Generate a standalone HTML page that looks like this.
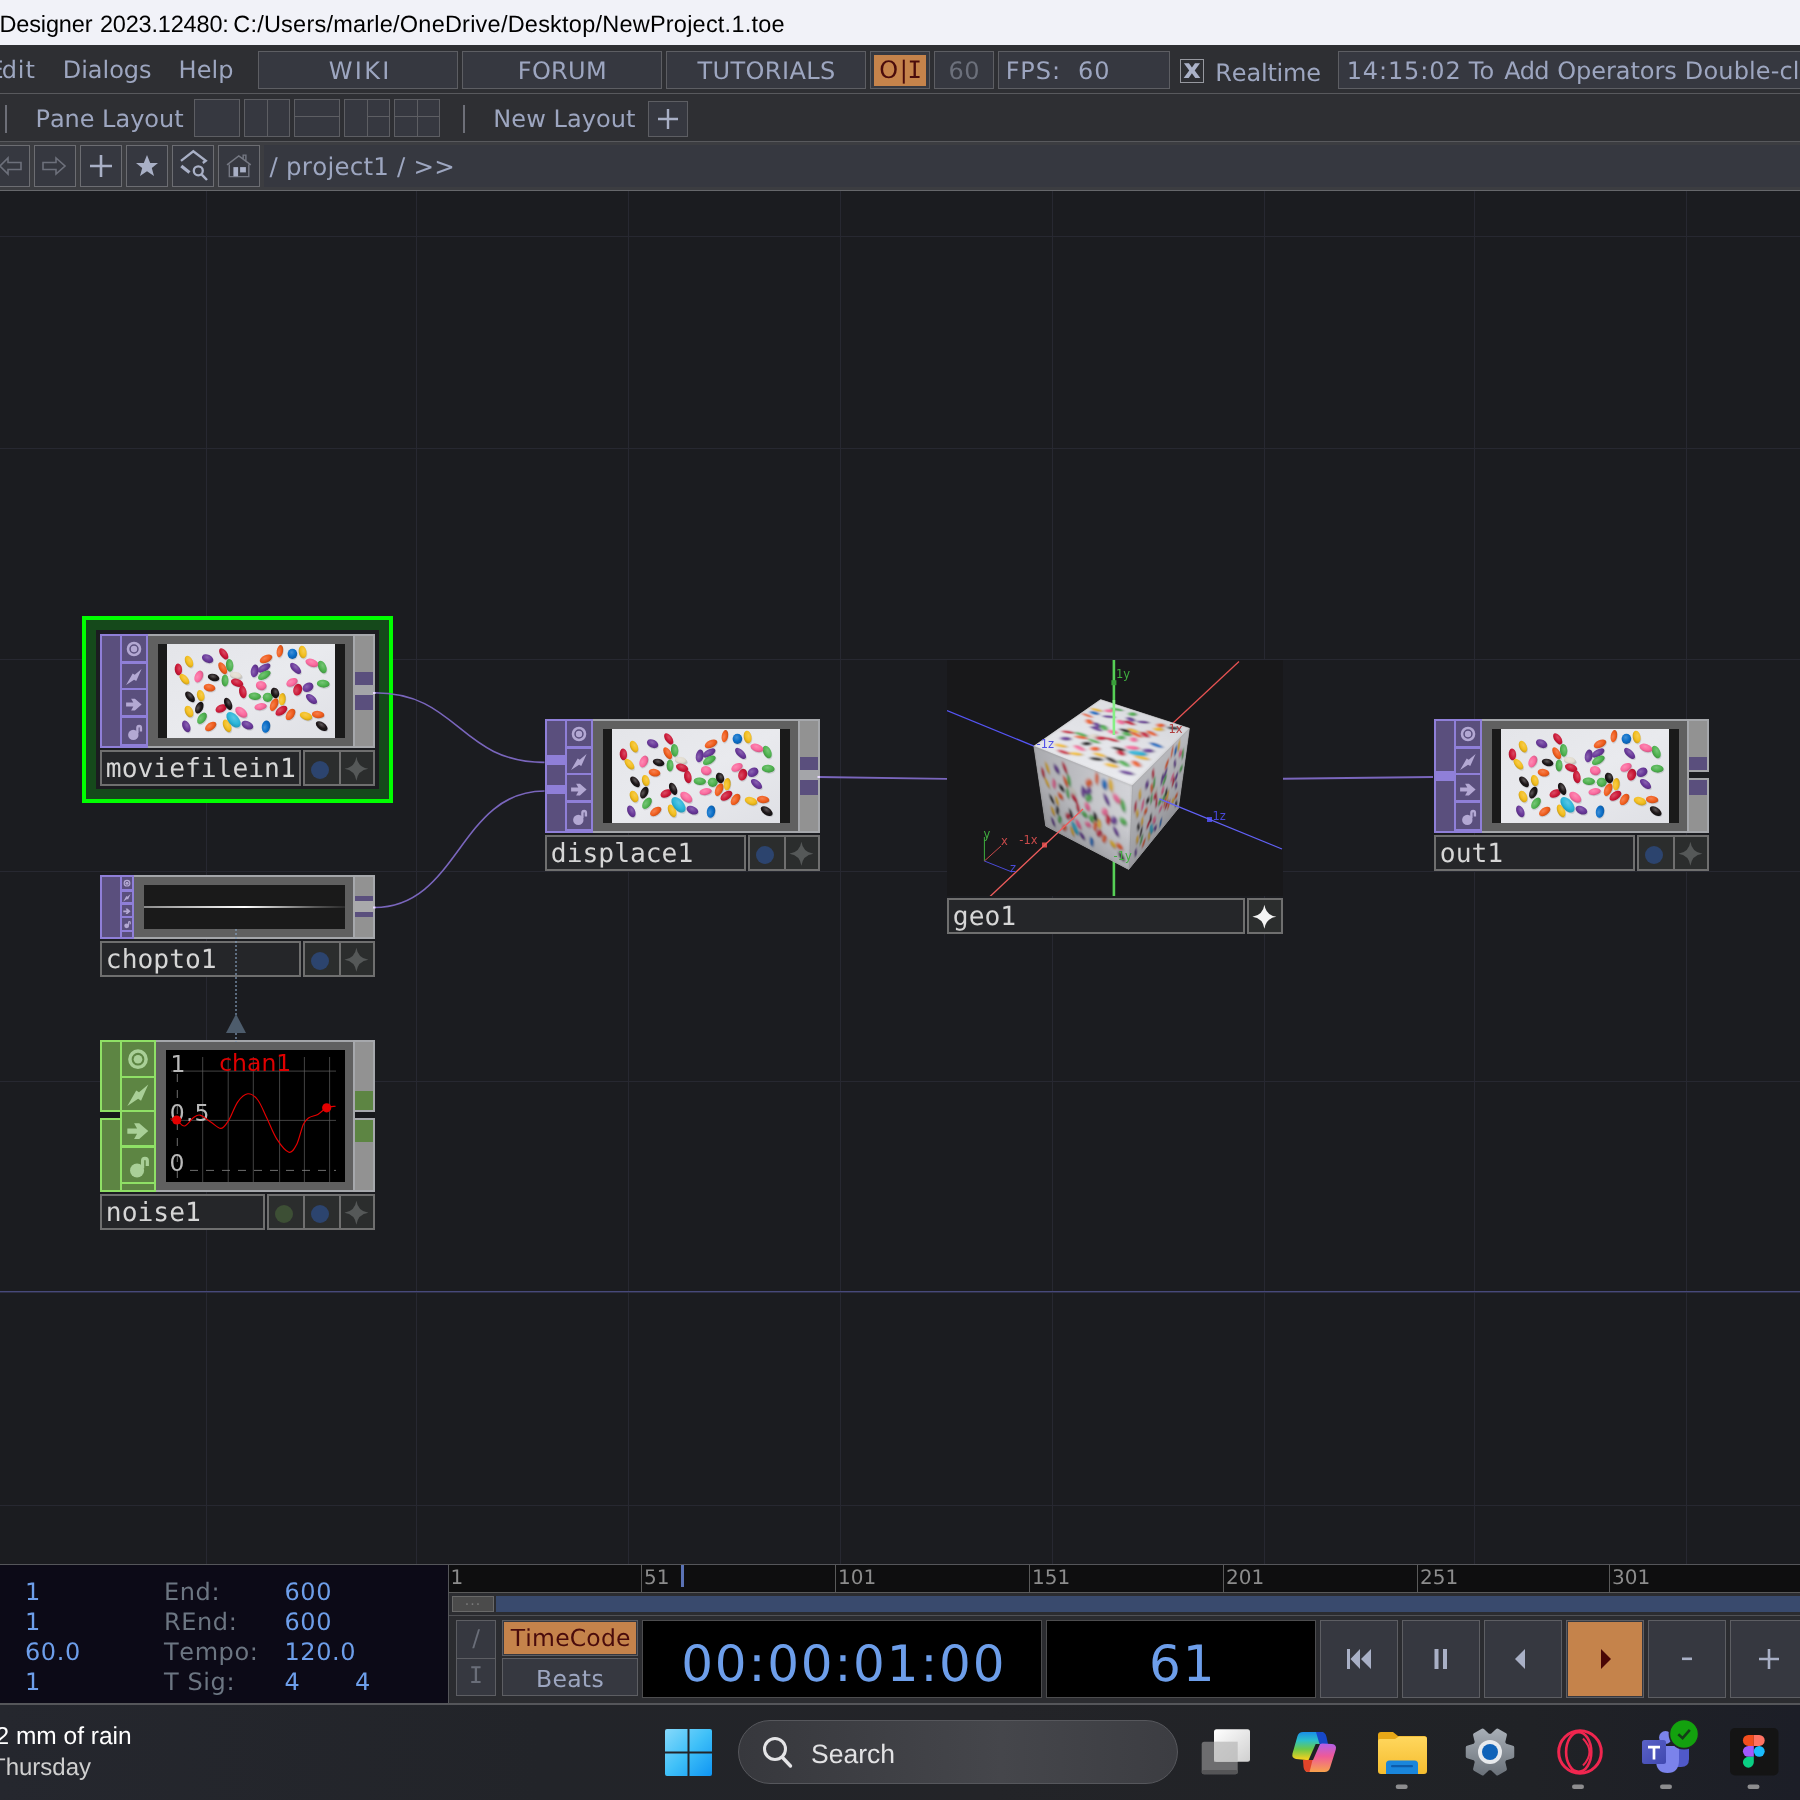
<!DOCTYPE html><html><head><meta charset="utf-8"><title>TouchDesigner</title><style>
html,body{margin:0;padding:0;}
body{width:1800px;height:1800px;overflow:hidden;background:#1b1c20;position:relative;font-family:"DejaVu Sans","Liberation Sans",sans-serif;}
.a{position:absolute;box-sizing:border-box;}
.t{white-space:pre;line-height:1;transform:translateZ(0);text-rendering:geometricPrecision;font-kerning:none;}
.ui{font-family:"DejaVu Sans","Liberation Sans",sans-serif;}
.mono{font-family:"DejaVu Sans Mono","Liberation Mono",monospace;}
.lib{font-family:"Liberation Sans",sans-serif;}
svg{position:absolute;overflow:visible;}
</style></head><body><svg width="0" height="0" style="left:0;top:0"><defs><linearGradient id="bgg" x1="0" y1="0" x2="1" y2="1"><stop offset="0" stop-color="#e4e5e9"/><stop offset="0.5" stop-color="#e9eaee"/><stop offset="1" stop-color="#dfe0e5"/></linearGradient><radialGradient id="bgR" cx="0.42" cy="0.36" r="0.72"><stop offset="0" stop-color="#d84c64"/><stop offset="0.55" stop-color="#cd1a38"/><stop offset="1" stop-color="#a0142c"/></radialGradient><radialGradient id="bgP" cx="0.42" cy="0.36" r="0.72"><stop offset="0" stop-color="#8a64b0"/><stop offset="0.55" stop-color="#69389a"/><stop offset="1" stop-color="#522c78"/></radialGradient><radialGradient id="bgY" cx="0.42" cy="0.36" r="0.72"><stop offset="0" stop-color="#f6cc50"/><stop offset="0.55" stop-color="#f3be1e"/><stop offset="1" stop-color="#be9417"/></radialGradient><radialGradient id="bgK" cx="0.42" cy="0.36" r="0.72"><stop offset="0" stop-color="#fc8bb4"/><stop offset="0.55" stop-color="#fb6a9f"/><stop offset="1" stop-color="#c4537c"/></radialGradient><radialGradient id="bgB" cx="0.42" cy="0.36" r="0.72"><stop offset="0" stop-color="#5b5657"/><stop offset="0.55" stop-color="#1b1416"/><stop offset="1" stop-color="#151011"/></radialGradient><radialGradient id="bgO" cx="0.42" cy="0.36" r="0.72"><stop offset="0" stop-color="#f48150"/><stop offset="0.55" stop-color="#f15e1e"/><stop offset="1" stop-color="#bc4917"/></radialGradient><radialGradient id="bgG" cx="0.42" cy="0.36" r="0.72"><stop offset="0" stop-color="#76c476"/><stop offset="0.55" stop-color="#4fb350"/><stop offset="1" stop-color="#3e8c3e"/></radialGradient><radialGradient id="bgW" cx="0.42" cy="0.36" r="0.72"><stop offset="0" stop-color="#e8e4da"/><stop offset="0.55" stop-color="#e2dcd0"/><stop offset="1" stop-color="#b0aca2"/></radialGradient><radialGradient id="bgC" cx="0.42" cy="0.36" r="0.72"><stop offset="0" stop-color="#59c6e2"/><stop offset="0.55" stop-color="#2ab6da"/><stop offset="1" stop-color="#218eaa"/></radialGradient><radialGradient id="bgU" cx="0.42" cy="0.36" r="0.72"><stop offset="0" stop-color="#418fd5"/><stop offset="0.55" stop-color="#0b6fc9"/><stop offset="1" stop-color="#09579d"/></radialGradient><g id="beans"><ellipse cx="57.2" cy="10.7" rx="6.7" ry="3.5" fill="#6a6c78" opacity="0.22" transform="rotate(55 57.2 10.7)"/><ellipse cx="41.1" cy="15.6" rx="6.2" ry="4.2" fill="#6a6c78" opacity="0.22" transform="rotate(25 41.1 15.6)"/><ellipse cx="22.5" cy="18.5" rx="6.5" ry="3.8" fill="#6a6c78" opacity="0.22" transform="rotate(65 22.5 18.5)"/><ellipse cx="11.9" cy="26.3" rx="6.1" ry="3.8" fill="#6a6c78" opacity="0.22" transform="rotate(85 11.9 26.3)"/><ellipse cx="17.9" cy="36.1" rx="6.7" ry="3.5" fill="#6a6c78" opacity="0.22" transform="rotate(50 17.9 36.1)"/><ellipse cx="32.3" cy="33.4" rx="6.5" ry="4.2" fill="#6a6c78" opacity="0.22" transform="rotate(-65 32.3 33.4)"/><ellipse cx="47.1" cy="34.4" rx="6.1" ry="3.6" fill="#6a6c78" opacity="0.22" transform="rotate(15 47.1 34.4)"/><ellipse cx="56.2" cy="25.1" rx="7.0" ry="3.5" fill="#6a6c78" opacity="0.22" transform="rotate(60 56.2 25.1)"/><ellipse cx="63.1" cy="22.2" rx="6.7" ry="3.8" fill="#6a6c78" opacity="0.22" transform="rotate(85 63.1 22.2)"/><ellipse cx="69.4" cy="32.4" rx="6.5" ry="3.6" fill="#6a6c78" opacity="0.22" transform="rotate(15 69.4 32.4)"/><ellipse cx="58.5" cy="37.3" rx="6.2" ry="3.5" fill="#6a6c78" opacity="0.22" transform="rotate(90 58.5 37.3)"/><ellipse cx="70.6" cy="39.7" rx="6.7" ry="3.9" fill="#6a6c78" opacity="0.22" transform="rotate(20 70.6 39.7)"/><ellipse cx="76.3" cy="48.8" rx="6.7" ry="3.8" fill="#6a6c78" opacity="0.22" transform="rotate(80 76.3 48.8)"/><ellipse cx="43.0" cy="44.6" rx="6.1" ry="3.9" fill="#6a6c78" opacity="0.22" transform="rotate(10 43.0 44.6)"/><ellipse cx="34.2" cy="52.5" rx="5.9" ry="3.8" fill="#6a6c78" opacity="0.22" transform="rotate(75 34.2 52.5)"/><ellipse cx="23.5" cy="53.7" rx="6.7" ry="3.6" fill="#6a6c78" opacity="0.22" transform="rotate(50 23.5 53.7)"/><ellipse cx="32.8" cy="64.5" rx="6.5" ry="3.8" fill="#6a6c78" opacity="0.22" transform="rotate(-65 32.8 64.5)"/><ellipse cx="22.5" cy="68.4" rx="6.5" ry="4.1" fill="#6a6c78" opacity="0.22" transform="rotate(65 22.5 68.4)"/><ellipse cx="35.5" cy="75.2" rx="6.7" ry="4.1" fill="#6a6c78" opacity="0.22" transform="rotate(-55 35.5 75.2)"/><ellipse cx="19.8" cy="83.3" rx="6.5" ry="3.8" fill="#6a6c78" opacity="0.22" transform="rotate(65 19.8 83.3)"/><ellipse cx="44.2" cy="83.3" rx="6.7" ry="3.8" fill="#6a6c78" opacity="0.22" transform="rotate(-35 44.2 83.3)"/><ellipse cx="54.6" cy="65.4" rx="6.1" ry="3.9" fill="#6a6c78" opacity="0.22" transform="rotate(-25 54.6 65.4)"/><ellipse cx="61.6" cy="60.7" rx="6.8" ry="3.6" fill="#6a6c78" opacity="0.22" transform="rotate(65 61.6 60.7)"/><ellipse cx="74.8" cy="69.2" rx="7.3" ry="4.4" fill="#6a6c78" opacity="0.22" transform="rotate(40 74.8 69.2)"/><ellipse cx="60.6" cy="82.8" rx="7.0" ry="3.8" fill="#6a6c78" opacity="0.22" transform="rotate(65 60.6 82.8)"/><ellipse cx="67.0" cy="76.7" rx="9.5" ry="5.5" fill="#6a6c78" opacity="0.22" transform="rotate(50 67.0 76.7)"/><ellipse cx="80.9" cy="82.1" rx="6.5" ry="4.1" fill="#6a6c78" opacity="0.22" transform="rotate(25 80.9 82.1)"/><ellipse cx="99.5" cy="83.5" rx="6.5" ry="4.4" fill="#6a6c78" opacity="0.22" transform="rotate(-80 99.5 83.5)"/><ellipse cx="94.1" cy="63.5" rx="6.5" ry="3.6" fill="#6a6c78" opacity="0.22" transform="rotate(-10 94.1 63.5)"/><ellipse cx="88.3" cy="53.2" rx="6.5" ry="3.8" fill="#6a6c78" opacity="0.22" transform="rotate(5 88.3 53.2)"/><ellipse cx="101.2" cy="54.2" rx="5.2" ry="4.8" fill="#6a6c78" opacity="0.22" transform="rotate(0 101.2 54.2)"/><ellipse cx="108.5" cy="49.8" rx="5.6" ry="4.2" fill="#6a6c78" opacity="0.22" transform="rotate(70 108.5 49.8)"/><ellipse cx="115.7" cy="56.0" rx="6.5" ry="3.6" fill="#6a6c78" opacity="0.22" transform="rotate(-85 115.7 56.0)"/><ellipse cx="107.6" cy="61.5" rx="7.0" ry="3.8" fill="#6a6c78" opacity="0.22" transform="rotate(-65 107.6 61.5)"/><ellipse cx="114.9" cy="67.7" rx="7.0" ry="4.1" fill="#6a6c78" opacity="0.22" transform="rotate(-35 114.9 67.7)"/><ellipse cx="124.0" cy="71.3" rx="6.7" ry="4.1" fill="#6a6c78" opacity="0.22" transform="rotate(-55 124.0 71.3)"/><ellipse cx="139.5" cy="73.0" rx="6.8" ry="4.1" fill="#6a6c78" opacity="0.22" transform="rotate(20 139.5 73.0)"/><ellipse cx="151.6" cy="71.5" rx="6.5" ry="3.8" fill="#6a6c78" opacity="0.22" transform="rotate(5 151.6 71.5)"/><ellipse cx="155.2" cy="83.0" rx="7.0" ry="3.8" fill="#6a6c78" opacity="0.22" transform="rotate(35 155.2 83.0)"/><ellipse cx="145.0" cy="55.9" rx="7.0" ry="3.6" fill="#6a6c78" opacity="0.22" transform="rotate(40 145.0 55.9)"/><ellipse cx="141.5" cy="44.2" rx="5.9" ry="4.6" fill="#6a6c78" opacity="0.22" transform="rotate(-30 141.5 44.2)"/><ellipse cx="131.2" cy="46.6" rx="6.2" ry="4.6" fill="#6a6c78" opacity="0.22" transform="rotate(-75 131.2 46.6)"/><ellipse cx="125.5" cy="39.3" rx="6.2" ry="4.1" fill="#6a6c78" opacity="0.22" transform="rotate(-25 125.5 39.3)"/><ellipse cx="156.7" cy="40.6" rx="6.7" ry="4.1" fill="#6a6c78" opacity="0.22" transform="rotate(5 156.7 40.6)"/><ellipse cx="155.7" cy="23.9" rx="7.0" ry="4.1" fill="#6a6c78" opacity="0.22" transform="rotate(65 155.7 23.9)"/><ellipse cx="145.4" cy="19.8" rx="7.0" ry="4.1" fill="#6a6c78" opacity="0.22" transform="rotate(20 145.4 19.8)"/><ellipse cx="136.1" cy="8.9" rx="6.7" ry="4.1" fill="#6a6c78" opacity="0.22" transform="rotate(80 136.1 8.9)"/><ellipse cx="125.9" cy="10.7" rx="4.9" ry="5.3" fill="#6a6c78" opacity="0.22" transform="rotate(0 125.9 10.7)"/><ellipse cx="113.4" cy="8.0" rx="6.5" ry="3.3" fill="#6a6c78" opacity="0.22" transform="rotate(-80 113.4 8.0)"/><ellipse cx="99.5" cy="15.8" rx="7.0" ry="3.8" fill="#6a6c78" opacity="0.22" transform="rotate(-25 99.5 15.8)"/><ellipse cx="129.1" cy="25.3" rx="7.3" ry="3.6" fill="#6a6c78" opacity="0.22" transform="rotate(45 129.1 25.3)"/><ellipse cx="88.2" cy="27.8" rx="6.7" ry="4.1" fill="#6a6c78" opacity="0.22" transform="rotate(-80 88.2 27.8)"/><ellipse cx="97.6" cy="24.9" rx="7.3" ry="3.6" fill="#6a6c78" opacity="0.22" transform="rotate(-30 97.6 24.9)"/><ellipse cx="97.8" cy="32.2" rx="7.3" ry="3.8" fill="#6a6c78" opacity="0.22" transform="rotate(-30 97.8 32.2)"/><ellipse cx="94.7" cy="42.5" rx="5.6" ry="4.7" fill="#6a6c78" opacity="0.22" transform="rotate(15 94.7 42.5)"/><ellipse cx="56.7" cy="9.8" rx="6.4" ry="3.4" fill="url(#bgR)" transform="rotate(55 56.7 9.8)"/><ellipse cx="40.6" cy="14.7" rx="6.0" ry="4.0" fill="url(#bgP)" transform="rotate(25 40.6 14.7)"/><ellipse cx="22.0" cy="17.6" rx="6.2" ry="3.7" fill="url(#bgY)" transform="rotate(65 22.0 17.6)"/><ellipse cx="11.4" cy="25.4" rx="5.9" ry="3.7" fill="url(#bgR)" transform="rotate(85 11.4 25.4)"/><ellipse cx="17.4" cy="35.2" rx="6.4" ry="3.4" fill="url(#bgY)" transform="rotate(50 17.4 35.2)"/><ellipse cx="31.8" cy="32.5" rx="6.2" ry="4.0" fill="url(#bgK)" transform="rotate(-65 31.8 32.5)"/><ellipse cx="46.6" cy="33.5" rx="5.9" ry="3.5" fill="url(#bgB)" transform="rotate(15 46.6 33.5)"/><ellipse cx="55.7" cy="24.2" rx="6.7" ry="3.4" fill="url(#bgO)" transform="rotate(60 55.7 24.2)"/><ellipse cx="62.6" cy="21.3" rx="6.4" ry="3.7" fill="url(#bgG)" transform="rotate(85 62.6 21.3)"/><ellipse cx="68.9" cy="31.5" rx="6.2" ry="3.5" fill="url(#bgW)" transform="rotate(15 68.9 31.5)"/><ellipse cx="58.0" cy="36.4" rx="6.0" ry="3.4" fill="url(#bgG)" transform="rotate(90 58.0 36.4)"/><ellipse cx="70.1" cy="38.8" rx="6.4" ry="3.8" fill="url(#bgR)" transform="rotate(20 70.1 38.8)"/><ellipse cx="75.8" cy="47.9" rx="6.4" ry="3.7" fill="url(#bgR)" transform="rotate(80 75.8 47.9)"/><ellipse cx="42.5" cy="43.7" rx="5.9" ry="3.8" fill="url(#bgO)" transform="rotate(10 42.5 43.7)"/><ellipse cx="33.7" cy="51.6" rx="5.7" ry="3.7" fill="url(#bgY)" transform="rotate(75 33.7 51.6)"/><ellipse cx="23.0" cy="52.8" rx="6.4" ry="3.5" fill="url(#bgB)" transform="rotate(50 23.0 52.8)"/><ellipse cx="32.3" cy="63.6" rx="6.2" ry="3.7" fill="url(#bgB)" transform="rotate(-65 32.3 63.6)"/><ellipse cx="22.0" cy="67.5" rx="6.2" ry="3.9" fill="url(#bgY)" transform="rotate(65 22.0 67.5)"/><ellipse cx="35.0" cy="74.3" rx="6.4" ry="3.9" fill="url(#bgG)" transform="rotate(-55 35.0 74.3)"/><ellipse cx="19.3" cy="82.4" rx="6.2" ry="3.7" fill="url(#bgP)" transform="rotate(65 19.3 82.4)"/><ellipse cx="43.7" cy="82.4" rx="6.4" ry="3.7" fill="url(#bgO)" transform="rotate(-35 43.7 82.4)"/><ellipse cx="54.1" cy="64.5" rx="5.9" ry="3.8" fill="url(#bgR)" transform="rotate(-25 54.1 64.5)"/><ellipse cx="61.1" cy="59.8" rx="6.5" ry="3.5" fill="url(#bgB)" transform="rotate(65 61.1 59.8)"/><ellipse cx="74.3" cy="68.3" rx="7.0" ry="4.2" fill="url(#bgK)" transform="rotate(40 74.3 68.3)"/><ellipse cx="60.1" cy="81.9" rx="6.7" ry="3.7" fill="url(#bgY)" transform="rotate(65 60.1 81.9)"/><ellipse cx="66.5" cy="75.8" rx="9.1" ry="5.3" fill="url(#bgC)" transform="rotate(50 66.5 75.8)"/><ellipse cx="80.4" cy="81.2" rx="6.2" ry="3.9" fill="url(#bgP)" transform="rotate(25 80.4 81.2)"/><ellipse cx="99.0" cy="82.6" rx="6.2" ry="4.2" fill="url(#bgU)" transform="rotate(-80 99.0 82.6)"/><ellipse cx="93.6" cy="62.6" rx="6.2" ry="3.5" fill="url(#bgK)" transform="rotate(-10 93.6 62.6)"/><ellipse cx="87.8" cy="52.3" rx="6.2" ry="3.7" fill="url(#bgG)" transform="rotate(5 87.8 52.3)"/><ellipse cx="100.7" cy="53.3" rx="5.0" ry="4.6" fill="url(#bgG)" transform="rotate(0 100.7 53.3)"/><ellipse cx="108.0" cy="48.9" rx="5.4" ry="4.0" fill="url(#bgB)" transform="rotate(70 108.0 48.9)"/><ellipse cx="115.2" cy="55.1" rx="6.2" ry="3.5" fill="url(#bgY)" transform="rotate(-85 115.2 55.1)"/><ellipse cx="107.1" cy="60.6" rx="6.7" ry="3.7" fill="url(#bgO)" transform="rotate(-65 107.1 60.6)"/><ellipse cx="114.4" cy="66.8" rx="6.7" ry="3.9" fill="url(#bgR)" transform="rotate(-35 114.4 66.8)"/><ellipse cx="123.5" cy="70.4" rx="6.4" ry="3.9" fill="url(#bgO)" transform="rotate(-55 123.5 70.4)"/><ellipse cx="139.0" cy="72.1" rx="6.5" ry="3.9" fill="url(#bgY)" transform="rotate(20 139.0 72.1)"/><ellipse cx="151.1" cy="70.6" rx="6.2" ry="3.7" fill="url(#bgO)" transform="rotate(5 151.1 70.6)"/><ellipse cx="154.7" cy="82.1" rx="6.7" ry="3.7" fill="url(#bgB)" transform="rotate(35 154.7 82.1)"/><ellipse cx="144.5" cy="55.0" rx="6.7" ry="3.5" fill="url(#bgP)" transform="rotate(40 144.5 55.0)"/><ellipse cx="141.0" cy="43.3" rx="5.7" ry="4.4" fill="url(#bgP)" transform="rotate(-30 141.0 43.3)"/><ellipse cx="130.7" cy="45.7" rx="6.0" ry="4.4" fill="url(#bgR)" transform="rotate(-75 130.7 45.7)"/><ellipse cx="125.0" cy="38.4" rx="6.0" ry="3.9" fill="url(#bgK)" transform="rotate(-25 125.0 38.4)"/><ellipse cx="156.2" cy="39.7" rx="6.4" ry="3.9" fill="url(#bgG)" transform="rotate(5 156.2 39.7)"/><ellipse cx="155.2" cy="23.0" rx="6.7" ry="3.9" fill="url(#bgG)" transform="rotate(65 155.2 23.0)"/><ellipse cx="144.9" cy="18.9" rx="6.7" ry="3.9" fill="url(#bgK)" transform="rotate(20 144.9 18.9)"/><ellipse cx="135.6" cy="8.0" rx="6.4" ry="3.9" fill="url(#bgY)" transform="rotate(80 135.6 8.0)"/><ellipse cx="125.4" cy="9.8" rx="4.8" ry="5.1" fill="url(#bgU)" transform="rotate(0 125.4 9.8)"/><ellipse cx="112.9" cy="7.1" rx="6.2" ry="3.2" fill="url(#bgO)" transform="rotate(-80 112.9 7.1)"/><ellipse cx="99.0" cy="14.9" rx="6.7" ry="3.7" fill="url(#bgO)" transform="rotate(-25 99.0 14.9)"/><ellipse cx="128.6" cy="24.4" rx="7.0" ry="3.5" fill="url(#bgP)" transform="rotate(45 128.6 24.4)"/><ellipse cx="87.7" cy="26.9" rx="6.4" ry="3.9" fill="url(#bgP)" transform="rotate(-80 87.7 26.9)"/><ellipse cx="97.1" cy="24.0" rx="7.0" ry="3.5" fill="url(#bgP)" transform="rotate(-30 97.1 24.0)"/><ellipse cx="97.3" cy="31.3" rx="7.0" ry="3.7" fill="url(#bgG)" transform="rotate(-30 97.3 31.3)"/><ellipse cx="94.2" cy="41.6" rx="5.4" ry="4.5" fill="url(#bgK)" transform="rotate(15 94.2 41.6)"/></g><g id="beanimg"><rect width="168" height="94" fill="url(#bgg)"/><use href="#beans"/></g><filter id="bl" x="-5%" y="-5%" width="110%" height="110%"><feGaussianBlur stdDeviation="0.45"/></filter><filter id="bl3" x="-5%" y="-5%" width="110%" height="110%"><feGaussianBlur stdDeviation="1.9 1.4"/></filter><filter id="bl2" x="-5%" y="-5%" width="110%" height="110%"><feGaussianBlur stdDeviation="1.1"/></filter></defs></svg><div class="a " style="left:206px;top:191px;width:1px;height:1373px;background:#272831;"></div><div class="a " style="left:416px;top:191px;width:1px;height:1373px;background:#272831;"></div><div class="a " style="left:628px;top:191px;width:1px;height:1373px;background:#272831;"></div><div class="a " style="left:840px;top:191px;width:1px;height:1373px;background:#272831;"></div><div class="a " style="left:1052px;top:191px;width:1px;height:1373px;background:#272831;"></div><div class="a " style="left:1264px;top:191px;width:1px;height:1373px;background:#272831;"></div><div class="a " style="left:1474px;top:191px;width:1px;height:1373px;background:#272831;"></div><div class="a " style="left:1686px;top:191px;width:1px;height:1373px;background:#272831;"></div><div class="a " style="left:0px;top:236px;width:1800px;height:1px;background:#272831;"></div><div class="a " style="left:0px;top:448px;width:1800px;height:1px;background:#272831;"></div><div class="a " style="left:0px;top:659px;width:1800px;height:1px;background:#272831;"></div><div class="a " style="left:0px;top:871px;width:1800px;height:1px;background:#272831;"></div><div class="a " style="left:0px;top:1081px;width:1800px;height:1px;background:#272831;"></div><div class="a " style="left:0px;top:1504.5px;width:1800px;height:1px;background:#272831;"></div><div class="a " style="left:0px;top:1291px;width:1800px;height:1px;background:#47497a;"></div><div class="a " style="left:0px;top:1292px;width:1800px;height:1px;background:#2d2e45;"></div><div class="a " style="left:0px;top:0px;width:1800px;height:45px;background:#f1f2f8;"></div><div class="a t lib" style="left:-0.627734px;top:13px;font-size:23.5px;color:#000;letter-spacing:-0.118px;">Designer</div><div class="a t lib" style="left:99.9181px;top:13px;font-size:23.5px;color:#000;letter-spacing:-0.176px;">2023.12480:</div><div class="a t lib" style="left:233.207px;top:13px;font-size:23.5px;color:#000;letter-spacing:0.227px;">C:/Users/marle/OneDrive/Desktop/NewProject.1.toe</div><div class="a " style="left:0px;top:45px;width:1800px;height:49px;background:#2e2f33;"></div><div class="a " style="left:0px;top:93px;width:1800px;height:1px;background:#58595d;"></div><div class="a t ui" style="left:-11.45px;top:58px;font-size:24px;color:#9da6c0;"><span style="letter-spacing:-1.938px">E</span><span style="letter-spacing:0.843px">dit</span></div><div class="a t ui" style="left:62.7445px;top:58px;font-size:24px;color:#9da6c0;letter-spacing:-0.020px;">Dialogs</div><div class="a t ui" style="left:178.545px;top:58px;font-size:24px;color:#9da6c0;letter-spacing:0.051px;">Help</div><div class="a " style="left:258px;top:51px;width:200px;height:38px;background:#363840;border:1px solid #5d5e63;"></div><div class="a t ui" style="left:328.803px;top:59px;font-size:24px;color:#9da6c0;letter-spacing:2.276px;">WIKI</div><div class="a " style="left:462px;top:51px;width:200px;height:38px;background:#363840;border:1px solid #5d5e63;"></div><div class="a t ui" style="left:517.845px;top:59px;font-size:24px;color:#9da6c0;letter-spacing:0.289px;">FORUM</div><div class="a " style="left:666px;top:51px;width:200px;height:38px;background:#363840;border:1px solid #5d5e63;"></div><div class="a t ui" style="left:697.47px;top:59px;font-size:24px;color:#9da6c0;letter-spacing:0.401px;">TUTORIALS</div><div class="a " style="left:870px;top:51px;width:60px;height:38px;background:#363840;border:1px solid #5d5e63;"></div><div class="a " style="left:874px;top:54.5px;width:52px;height:31px;background:#c5834b;"></div><div class="a t ui" style="left:879.152px;top:58px;font-size:24px;color:#4a0c0c;"><span style="letter-spacing:1.618px">O</span><span style="letter-spacing:-0.202px">|</span><span class="mono">I</span></div><div class="a " style="left:934px;top:51px;width:60px;height:38px;background:#363840;border:1px solid #5d5e63;"></div><div class="a t ui" style="left:948.524px;top:59px;font-size:24px;color:#6c707b;letter-spacing:0.530px;">60</div><div class="a " style="left:998px;top:51px;width:172px;height:38px;background:#363840;border:1px solid #5d5e63;"></div><div class="a t ui" style="left:1005.64px;top:59px;font-size:24px;color:#9da6c0;letter-spacing:0.936px;">FPS:  60</div><div class="a " style="left:1180px;top:59px;width:24px;height:24px;background:#2e2f33;border:1px solid #96989f;"></div><div class="a t ui" style="left:1180px;top:55.9px;font-size:27px;color:#abb2c8;width:24px;text-align:center;font-weight:bold;">x</div><div class="a t ui" style="left:1215.34px;top:61px;font-size:24px;color:#9da6c0;letter-spacing:-0.187px;">Realtime</div><div class="a " style="left:1338px;top:51px;width:480px;height:38px;background:#363840;border:1px solid #5d5e63;"></div><div class="a t ui" style="left:1346.66px;top:59px;font-size:24px;color:#9da6c0;letter-spacing:0.893px;">14:15:02</div><div class="a t ui" style="left:1468.87px;top:59px;font-size:24px;color:#9da6c0;letter-spacing:-3.902px;">To</div><div class="a t ui" style="left:1504.21px;top:59px;font-size:24px;color:#9da6c0;letter-spacing:-0.860px;">Add</div><div class="a t ui" style="left:1557.25px;top:59px;font-size:24px;color:#9da6c0;letter-spacing:-0.051px;">Operators</div><div class="a t ui" style="left:1684.84px;top:59px;font-size:24px;color:#9da6c0;letter-spacing:0.142px;">Double-cl</div><div class="a " style="left:0px;top:94px;width:1800px;height:48px;background:#2e2f33;"></div><div class="a " style="left:0px;top:141px;width:1800px;height:1px;background:#58595d;"></div><div class="a " style="left:5px;top:105px;width:2px;height:28px;background:#6d6f78;"></div><div class="a t ui" style="left:35.4445px;top:107px;font-size:24px;color:#9da6c0;letter-spacing:-0.024px;">Pane Layout</div><div class="a " style="left:194px;top:99px;width:46px;height:38px;background:#363840;border:1px solid #5d5e63;"></div><div class="a " style="left:244px;top:99px;width:46px;height:38px;background:#363840;border:1px solid #5d5e63;"></div><div class="a " style="left:294px;top:99px;width:46px;height:38px;background:#363840;border:1px solid #5d5e63;"></div><div class="a " style="left:344px;top:99px;width:46px;height:38px;background:#363840;border:1px solid #5d5e63;"></div><div class="a " style="left:394px;top:99px;width:46px;height:38px;background:#363840;border:1px solid #5d5e63;"></div><div class="a " style="left:266.5px;top:100px;width:1px;height:36px;background:#5d5e63;"></div><div class="a " style="left:295px;top:115.5px;width:44px;height:1px;background:#5d5e63;"></div><div class="a " style="left:367px;top:100px;width:1px;height:36px;background:#5d5e63;"></div><div class="a " style="left:367px;top:115.5px;width:22px;height:1px;background:#5d5e63;"></div><div class="a " style="left:416.5px;top:100px;width:1px;height:36px;background:#5d5e63;"></div><div class="a " style="left:395px;top:115.5px;width:44px;height:1px;background:#5d5e63;"></div><div class="a " style="left:463px;top:105px;width:2px;height:28px;background:#6d6f78;"></div><div class="a t ui" style="left:493.345px;top:107px;font-size:24px;color:#9da6c0;letter-spacing:0.052px;">New Layout</div><div class="a " style="left:648px;top:101px;width:40px;height:36px;background:#363840;border:1px solid #5d5e63;"></div><svg class="a" style="left:648px;top:101px" width="40" height="36"><path d="M20 8V28M10 18H30" stroke="#a9b0c6" stroke-width="2.4" fill="none"/></svg><div class="a " style="left:0px;top:142px;width:1800px;height:49px;background:#3c3d41;"></div><div class="a " style="left:264px;top:145px;width:1540px;height:42px;background:#363840;"></div><div class="a " style="left:0px;top:190px;width:1800px;height:1px;background:#66676b;"></div><div class="a " style="left:-12px;top:145px;width:42px;height:42px;background:#363840;border:1px solid #6c6d72;"></div><div class="a " style="left:34px;top:145px;width:42px;height:42px;background:#363840;border:1px solid #6c6d72;"></div><div class="a " style="left:80px;top:145px;width:42px;height:42px;background:#363840;border:1px solid #6c6d72;"></div><div class="a " style="left:126px;top:145px;width:42px;height:42px;background:#363840;border:1px solid #6c6d72;"></div><div class="a " style="left:172px;top:145px;width:42px;height:42px;background:#363840;border:1px solid #6c6d72;"></div><div class="a " style="left:218px;top:145px;width:42px;height:42px;background:#363840;border:1px solid #6c6d72;"></div><svg class="a" style="left:0;top:142px" width="270" height="49" fill="none" stroke="#a9b0c6"><path d="M21 20.5H8V16L0 24L8 32V27.5H21Z" stroke="#6d707b" stroke-width="1.6"/><path d="M43 20.5H56V16L65 24L56 32V27.5H43Z" stroke="#6d707b" stroke-width="1.6"/><path d="M101 13V35M90 24H112" stroke-width="2.6"/><path d="M147 13L150.2 21H158L151.8 26L154 34L147 29.2L140 34L142.2 26L136 21H143.8Z" fill="#a9b0c6" stroke="none"/><path d="M181 18.8L193.3 9.3L205.8 18.8L202.8 21" stroke-width="2.3"/><path d="M181.3 24L189.5 30.5" stroke-width="3.2"/><circle cx="198.3" cy="28.8" r="4.5" stroke-width="2.3"/><path d="M201.8 32.6L207 38" stroke-width="2.5"/><path d="M227 22.9L238.8 13.9L250.8 22.9M229.3 22.5V34.6H248.8V22.5M243.2 16.5V13.1H245.9V18.8" stroke-width="1.4" stroke="#757883"/><rect x="233.4" y="25.1" width="4.7" height="9.2" fill="#a9b0c6" stroke="none"/><rect x="240.1" y="25.1" width="5.8" height="5.3" fill="#a9b0c6" stroke="none"/></svg><div class="a t ui" style="left:269.6px;top:155.2px;font-size:24.5px;color:#9da6c0;letter-spacing:0.229px;">/ project1 / &gt;&gt;</div><div class="a " style="left:82px;top:616px;width:311px;height:187px;background:#15491b;border:4px solid #00ff00;"></div><div class="a " style="left:96px;top:630px;width:283px;height:159px;background:#1b1c20;"></div><div class="a " style="left:100px;top:634px;width:48px;height:114px;background:#8f7fd8;"></div><div class="a " style="left:102px;top:636px;width:18px;height:110px;background:#5a4f7d;"></div><div class="a " style="left:122px;top:636px;width:24px;height:25.4px;background:#5a4f7d;"></div><div class="a " style="left:122px;top:664.2px;width:24px;height:23.6px;background:#5a4f7d;"></div><div class="a " style="left:122px;top:690.3px;width:24px;height:25px;background:#5a4f7d;"></div><div class="a " style="left:122px;top:717.9px;width:24px;height:25.8px;background:#5a4f7d;"></div><svg class="a" style="left:0;top:0" width="1800" height="1800"><g transform="translate(134 648.7) scale(1)"><circle cy="0.3" r="6.0" fill="none" stroke="#b3a8d3" stroke-width="2.6"/><circle cy="0.3" r="3.2" fill="#b3a8d3"/></g><g transform="translate(134 676.4) scale(1)"><path d="M-7.9 8.6L-1.3 -2.9L0.75 -1.6L7.6 -7.3L2.25 4.7L0.1 3.3Z" fill="#b3a8d3"/></g><g transform="translate(134 702.8) scale(1)"><path d="M-7.9 -0.2H-0.7L-2.9 -4.1H0.9L7.6 1.7L0.9 7.6H-2.9L-0.7 3.7H-7.9Z" fill="#b3a8d3"/></g><g transform="translate(134 730.8) scale(1)"><circle cx="-0.7" cy="4.1" r="5.2" fill="#b3a8d3"/><path d="M3.4 2.5V-3.1A1.75 1.75 0 0 1 6.9 -3.1V0.8" fill="none" stroke="#b3a8d3" stroke-width="2.4"/></g></svg><div class="a " style="left:148px;top:634px;width:227px;height:114px;background:#a4a6aa;"></div><div class="a " style="left:148px;top:636px;width:205px;height:110px;background:#606060;"></div><div class="a " style="left:353px;top:634px;width:22px;height:114px;background:#a6a8ac;"></div><div class="a " style="left:355px;top:636px;width:18px;height:110px;background:#929292;"></div><div class="a " style="left:158px;top:644px;width:187px;height:94px;background:#1a1a1a;"></div><svg class="a" style="left:167px;top:644px" width="168" height="94" viewBox="0 0 168 94"><g filter="url(#bl)"><use href="#beanimg"/></g></svg><div class="a " style="left:355px;top:672.1px;width:18px;height:12.7px;background:#5a4f7d;"></div><div class="a " style="left:355px;top:695px;width:18px;height:14.8px;background:#5a4f7d;"></div><div class="a " style="left:353px;top:684.8px;width:22px;height:10.2px;background:#a4a5a9;"></div><div class="a " style="left:100px;top:750px;width:200.5px;height:36px;background:#252629;border:2px solid #6f6f6f;"></div><div class="a t mono" style="left:105.8px;top:756.3px;font-size:26.3px;color:#d6d6d6;">moviefilein1</div><div class="a " style="left:303px;top:750px;width:37.8px;height:36px;background:#2b2d2d;border:2px solid #6f6f6f;"></div><div class="a " style="left:338.8px;top:750px;width:36.2px;height:36px;background:#2b2d2d;border:2px solid #6f6f6f;"></div><svg class="a" style="left:0;top:0" width="1800" height="1800"><circle cx="320" cy="770" r="9" fill="#2c446e"/><path d="M356.4 756.8Q357.9 767.3 368.4 768.8Q357.9 770.3 356.4 780.8Q354.9 770.3 344.4 768.8Q354.9 767.3 356.4 756.8Z" fill="#555858"/></svg><div class="a " style="left:545px;top:719px;width:48px;height:114px;background:#8f7fd8;"></div><div class="a " style="left:547px;top:721px;width:18px;height:110px;background:#5a4f7d;"></div><div class="a " style="left:567px;top:721px;width:24px;height:25.4px;background:#5a4f7d;"></div><div class="a " style="left:567px;top:749.2px;width:24px;height:23.6px;background:#5a4f7d;"></div><div class="a " style="left:567px;top:775.3px;width:24px;height:25px;background:#5a4f7d;"></div><div class="a " style="left:567px;top:802.9px;width:24px;height:25.8px;background:#5a4f7d;"></div><svg class="a" style="left:0;top:0" width="1800" height="1800"><g transform="translate(579 733.7) scale(1)"><circle cy="0.3" r="6.0" fill="none" stroke="#b3a8d3" stroke-width="2.6"/><circle cy="0.3" r="3.2" fill="#b3a8d3"/></g><g transform="translate(579 761.4) scale(1)"><path d="M-7.9 8.6L-1.3 -2.9L0.75 -1.6L7.6 -7.3L2.25 4.7L0.1 3.3Z" fill="#b3a8d3"/></g><g transform="translate(579 787.8) scale(1)"><path d="M-7.9 -0.2H-0.7L-2.9 -4.1H0.9L7.6 1.7L0.9 7.6H-2.9L-0.7 3.7H-7.9Z" fill="#b3a8d3"/></g><g transform="translate(579 815.8) scale(1)"><circle cx="-0.7" cy="4.1" r="5.2" fill="#b3a8d3"/><path d="M3.4 2.5V-3.1A1.75 1.75 0 0 1 6.9 -3.1V0.8" fill="none" stroke="#b3a8d3" stroke-width="2.4"/></g></svg><div class="a " style="left:593px;top:719px;width:227px;height:114px;background:#a4a6aa;"></div><div class="a " style="left:593px;top:721px;width:205px;height:110px;background:#606060;"></div><div class="a " style="left:798px;top:719px;width:22px;height:114px;background:#a6a8ac;"></div><div class="a " style="left:800px;top:721px;width:18px;height:110px;background:#929292;"></div><div class="a " style="left:603px;top:729px;width:187px;height:94px;background:#1a1a1a;"></div><svg class="a" style="left:612px;top:729px" width="168" height="94" viewBox="0 0 168 94"><g filter="url(#bl)"><use href="#beanimg"/></g></svg><div class="a " style="left:800px;top:757.1px;width:18px;height:12.7px;background:#5a4f7d;"></div><div class="a " style="left:800px;top:780px;width:18px;height:14.8px;background:#5a4f7d;"></div><div class="a " style="left:798px;top:769.8px;width:22px;height:10.2px;background:#a4a5a9;"></div><div class="a " style="left:545px;top:755px;width:22px;height:10px;background:#8f7fd8;"></div><div class="a " style="left:545px;top:784.5px;width:22px;height:9.5px;background:#8f7fd8;"></div><div class="a " style="left:545px;top:835px;width:200.5px;height:36px;background:#252629;border:2px solid #6f6f6f;"></div><div class="a t mono" style="left:550.8px;top:841.3px;font-size:26.3px;color:#d6d6d6;">displace1</div><div class="a " style="left:748px;top:835px;width:37.8px;height:36px;background:#2b2d2d;border:2px solid #6f6f6f;"></div><div class="a " style="left:783.8px;top:835px;width:36.2px;height:36px;background:#2b2d2d;border:2px solid #6f6f6f;"></div><svg class="a" style="left:0;top:0" width="1800" height="1800"><circle cx="765" cy="855" r="9" fill="#2c446e"/><path d="M801.4 841.8Q802.9 852.3 813.4 853.8Q802.9 855.3 801.4 865.8Q799.9 855.3 789.4 853.8Q799.9 852.3 801.4 841.8Z" fill="#555858"/></svg><div class="a " style="left:1434px;top:719px;width:48px;height:114px;background:#8f7fd8;"></div><div class="a " style="left:1436px;top:721px;width:18px;height:110px;background:#5a4f7d;"></div><div class="a " style="left:1456px;top:721px;width:24px;height:25.4px;background:#5a4f7d;"></div><div class="a " style="left:1456px;top:749.2px;width:24px;height:23.6px;background:#5a4f7d;"></div><div class="a " style="left:1456px;top:775.3px;width:24px;height:25px;background:#5a4f7d;"></div><div class="a " style="left:1456px;top:802.9px;width:24px;height:25.8px;background:#5a4f7d;"></div><svg class="a" style="left:0;top:0" width="1800" height="1800"><g transform="translate(1468 733.7) scale(1)"><circle cy="0.3" r="6.0" fill="none" stroke="#b3a8d3" stroke-width="2.6"/><circle cy="0.3" r="3.2" fill="#b3a8d3"/></g><g transform="translate(1468 761.4) scale(1)"><path d="M-7.9 8.6L-1.3 -2.9L0.75 -1.6L7.6 -7.3L2.25 4.7L0.1 3.3Z" fill="#b3a8d3"/></g><g transform="translate(1468 787.8) scale(1)"><path d="M-7.9 -0.2H-0.7L-2.9 -4.1H0.9L7.6 1.7L0.9 7.6H-2.9L-0.7 3.7H-7.9Z" fill="#b3a8d3"/></g><g transform="translate(1468 815.8) scale(1)"><circle cx="-0.7" cy="4.1" r="5.2" fill="#b3a8d3"/><path d="M3.4 2.5V-3.1A1.75 1.75 0 0 1 6.9 -3.1V0.8" fill="none" stroke="#b3a8d3" stroke-width="2.4"/></g></svg><div class="a " style="left:1482px;top:719px;width:227px;height:114px;background:#a4a6aa;"></div><div class="a " style="left:1482px;top:721px;width:205px;height:110px;background:#606060;"></div><div class="a " style="left:1687px;top:719px;width:22px;height:114px;background:#a6a8ac;"></div><div class="a " style="left:1689px;top:721px;width:18px;height:110px;background:#929292;"></div><div class="a " style="left:1492px;top:729px;width:187px;height:94px;background:#1a1a1a;"></div><svg class="a" style="left:1501px;top:729px" width="168" height="94" viewBox="0 0 168 94"><g filter="url(#bl)"><use href="#beanimg"/></g></svg><div class="a " style="left:1689px;top:757.1px;width:18px;height:12.7px;background:#5a4f7d;"></div><div class="a " style="left:1689px;top:780px;width:18px;height:14.8px;background:#5a4f7d;"></div><div class="a " style="left:1687px;top:769.8px;width:22px;height:10.2px;background:#a4a5a9;"></div><div class="a " style="left:1689px;top:772.1px;width:21px;height:5.8px;background:#1b1c20;"></div><div class="a " style="left:1434px;top:770.5px;width:22px;height:10px;background:#8f7fd8;"></div><div class="a " style="left:1434px;top:835px;width:200.5px;height:36px;background:#252629;border:2px solid #6f6f6f;"></div><div class="a t mono" style="left:1439.8px;top:841.3px;font-size:26.3px;color:#d6d6d6;">out1</div><div class="a " style="left:1637px;top:835px;width:37.8px;height:36px;background:#2b2d2d;border:2px solid #6f6f6f;"></div><div class="a " style="left:1672.8px;top:835px;width:36.2px;height:36px;background:#2b2d2d;border:2px solid #6f6f6f;"></div><svg class="a" style="left:0;top:0" width="1800" height="1800"><circle cx="1654" cy="855" r="9" fill="#2c446e"/><path d="M1690.4 841.8Q1691.9 852.3 1702.4 853.8Q1691.9 855.3 1690.4 865.8Q1688.9 855.3 1678.4 853.8Q1688.9 852.3 1690.4 841.8Z" fill="#555858"/></svg><div class="a " style="left:100px;top:875px;width:34px;height:64px;background:#8f7fd8;"></div><div class="a " style="left:102px;top:877px;width:18px;height:60px;background:#5a4f7d;"></div><div class="a " style="left:122px;top:877.3px;width:10px;height:11.5px;background:#5a4f7d;"></div><div class="a " style="left:122px;top:891.6px;width:10px;height:10.8px;background:#5a4f7d;"></div><div class="a " style="left:122px;top:904.9px;width:10px;height:11.2px;background:#5a4f7d;"></div><div class="a " style="left:122px;top:918.2px;width:10px;height:11.4px;background:#5a4f7d;"></div><div class="a " style="left:122px;top:931.8px;width:10px;height:5.2px;background:#5a4f7d;"></div><svg class="a" style="left:0;top:0" width="1800" height="1800"><g transform="translate(127 883.05) scale(0.47)"><circle cy="0.3" r="6.0" fill="none" stroke="#b3a8d3" stroke-width="2.6"/><circle cy="0.3" r="3.2" fill="#b3a8d3"/></g><g transform="translate(127 897.4) scale(0.47)"><path d="M-7.9 8.6L-1.3 -2.9L0.75 -1.6L7.6 -7.3L2.25 4.7L0.1 3.3Z" fill="#b3a8d3"/></g><g transform="translate(127 910.5) scale(0.47)"><path d="M-7.9 -0.2H-0.7L-2.9 -4.1H0.9L7.6 1.7L0.9 7.6H-2.9L-0.7 3.7H-7.9Z" fill="#b3a8d3"/></g><g transform="translate(127 923.9) scale(0.47)"><circle cx="-0.7" cy="4.1" r="5.2" fill="#b3a8d3"/><path d="M3.4 2.5V-3.1A1.75 1.75 0 0 1 6.9 -3.1V0.8" fill="none" stroke="#b3a8d3" stroke-width="2.4"/></g></svg><div class="a " style="left:134px;top:875px;width:241px;height:64px;background:#a4a6aa;"></div><div class="a " style="left:134px;top:877px;width:219px;height:60px;background:#606060;"></div><div class="a " style="left:353px;top:875px;width:22px;height:64px;background:#a6a8ac;"></div><div class="a " style="left:355px;top:877px;width:18px;height:60px;background:#929292;"></div><div class="a " style="left:144px;top:885px;width:201px;height:44px;background:#1a1a1a;"></div><div class="a " style="left:144px;top:906.2px;width:201px;height:1.8px;background:linear-gradient(90deg,#8a8a8a,#ffffff 50%,#5a5a5a 85%,#2a2a2a);"></div><div class="a " style="left:355px;top:896px;width:18px;height:5px;background:#5a4f7d;"></div><div class="a " style="left:355px;top:911.5px;width:18px;height:5px;background:#5a4f7d;"></div><div class="a " style="left:353px;top:901px;width:22px;height:10.5px;background:#a9a9ab;"></div><div class="a " style="left:100px;top:941px;width:200.5px;height:36px;background:#252629;border:2px solid #6f6f6f;"></div><div class="a t mono" style="left:105.8px;top:947.3px;font-size:26.3px;color:#d6d6d6;">chopto1</div><div class="a " style="left:303px;top:941px;width:37.8px;height:36px;background:#2b2d2d;border:2px solid #6f6f6f;"></div><div class="a " style="left:338.8px;top:941px;width:36.2px;height:36px;background:#2b2d2d;border:2px solid #6f6f6f;"></div><svg class="a" style="left:0;top:0" width="1800" height="1800"><circle cx="320" cy="961" r="9" fill="#2c446e"/><path d="M356.4 947.8Q357.9 958.3 368.4 959.8Q357.9 961.3 356.4 971.8Q354.9 961.3 344.4 959.8Q354.9 958.3 356.4 947.8Z" fill="#555858"/></svg><div class="a " style="left:100px;top:1040px;width:56px;height:152px;background:#8fe066;"></div><div class="a " style="left:102px;top:1042px;width:18px;height:148px;background:#5d8543;"></div><div class="a " style="left:122px;top:1042px;width:32px;height:33.6px;background:#5d8543;"></div><div class="a " style="left:122px;top:1078px;width:32px;height:32px;background:#5d8543;"></div><div class="a " style="left:122px;top:1111.9px;width:32px;height:33.6px;background:#5d8543;"></div><div class="a " style="left:122px;top:1148px;width:32px;height:33.8px;background:#5d8543;"></div><div class="a " style="left:122px;top:1184px;width:32px;height:6px;background:#5d8543;"></div><svg class="a" style="left:0;top:0" width="1800" height="1800"><g transform="translate(138 1058.8) scale(1.35)"><circle cy="0.3" r="6.0" fill="none" stroke="#a9cf97" stroke-width="2.6"/><circle cy="0.3" r="3.2" fill="#a9cf97"/></g><g transform="translate(138 1094.4) scale(1.35)"><path d="M-7.9 8.6L-1.3 -2.9L0.75 -1.6L7.6 -7.3L2.25 4.7L0.1 3.3Z" fill="#a9cf97"/></g><g transform="translate(138 1128.7) scale(1.35)"><path d="M-7.9 -0.2H-0.7L-2.9 -4.1H0.9L7.6 1.7L0.9 7.6H-2.9L-0.7 3.7H-7.9Z" fill="#a9cf97"/></g><g transform="translate(138 1164.9) scale(1.35)"><circle cx="-0.7" cy="4.1" r="5.2" fill="#a9cf97"/><path d="M3.4 2.5V-3.1A1.75 1.75 0 0 1 6.9 -3.1V0.8" fill="none" stroke="#a9cf97" stroke-width="2.4"/></g></svg><div class="a " style="left:156px;top:1040px;width:219px;height:152px;background:#a4a6aa;"></div><div class="a " style="left:156px;top:1042px;width:197px;height:148px;background:#606060;"></div><div class="a " style="left:353px;top:1040px;width:22px;height:152px;background:#a6a8ac;"></div><div class="a " style="left:355px;top:1042px;width:18px;height:148px;background:#929292;"></div><div class="a " style="left:166px;top:1050px;width:179px;height:132px;background:#000;"></div><div class="a " style="left:100px;top:1112px;width:20px;height:6px;background:#17181b;"></div><div class="a " style="left:102px;top:1110px;width:18px;height:2px;background:#8fe066;"></div><div class="a " style="left:102px;top:1118px;width:18px;height:2px;background:#8fe066;"></div><div class="a " style="left:355px;top:1091px;width:18px;height:19px;background:#5d8543;"></div><div class="a " style="left:355px;top:1120px;width:18px;height:22px;background:#5d8543;"></div><div class="a " style="left:355px;top:1112px;width:20px;height:6px;background:#17181b;"></div><div class="a " style="left:353px;top:1110px;width:20px;height:2px;background:#a6a8ac;"></div><div class="a " style="left:353px;top:1118px;width:20px;height:2px;background:#a6a8ac;"></div><div class="a " style="left:100px;top:1194px;width:165px;height:36px;background:#252629;border:2px solid #6f6f6f;"></div><div class="a t mono" style="left:105.8px;top:1200.3px;font-size:26.3px;color:#d6d6d6;">noise1</div><div class="a " style="left:267px;top:1194px;width:37.8px;height:36px;background:#2b2d2d;border:2px solid #6f6f6f;"></div><div class="a " style="left:302.8px;top:1194px;width:38px;height:36px;background:#2b2d2d;border:2px solid #6f6f6f;"></div><div class="a " style="left:338.8px;top:1194px;width:36.2px;height:36px;background:#2b2d2d;border:2px solid #6f6f6f;"></div><svg class="a" style="left:0;top:0" width="1800" height="1800"><circle cx="284" cy="1214" r="9" fill="#3d4f35"/><circle cx="320" cy="1214" r="9" fill="#2c446e"/><path d="M356.4 1200.8Q357.9 1211.3 368.4 1212.8Q357.9 1214.3 356.4 1224.8Q354.9 1214.3 344.4 1212.8Q354.9 1211.3 356.4 1200.8Z" fill="#555858"/></svg><svg class="a" style="left:166px;top:1050px" width="179" height="132"><path d="M36.7 7V132" stroke="#606060" stroke-width="0.7"/><path d="M62.2 7V132" stroke="#606060" stroke-width="0.7"/><path d="M87.3 7V132" stroke="#606060" stroke-width="0.7"/><path d="M113.6 7V132" stroke="#606060" stroke-width="0.7"/><path d="M138.4 7V132" stroke="#606060" stroke-width="0.7"/><path d="M163.6 7V132" stroke="#606060" stroke-width="0.7"/><path d="M5 21.1H170M5 70.4H170" stroke="#606060" stroke-width="0.7"/><path d="M24 120.4H170" stroke="#8a8a8a" stroke-width="0.8" stroke-dasharray="8 8"/><path d="M11.3 24V128" stroke="#8a8a8a" stroke-width="0.8" stroke-dasharray="8 8"/><text x="4.4" y="22" font-size="23.5" font-family="DejaVu Sans, Liberation Sans, sans-serif" fill="#b9b9b9">1</text><text x="3.8" y="70.9" font-size="23.5" font-family="DejaVu Sans, Liberation Sans, sans-serif" fill="#b9b9b9" letter-spacing="1.2">0.5</text><text x="3.6" y="120.6" font-size="23.5" font-family="DejaVu Sans, Liberation Sans, sans-serif" fill="#b9b9b9">0</text><text x="53.2" y="20.6" font-size="23.5" font-family="DejaVu Sans, Liberation Sans, sans-serif" fill="#e00000">chan1</text><path d="M4.4 68.9C5.5 69.1 8.4 68.8 10.7 70.0C13.0 71.2 15.6 76.4 18.4 76.0C21.2 75.6 24.7 69.6 27.3 67.8C29.9 66.0 31.0 64.4 34.0 65.1C37.0 65.8 41.6 70.0 45.1 72.2C48.6 74.4 52.1 78.8 55.1 78.4C58.1 78.0 60.1 74.4 62.9 70.0C65.7 65.6 68.6 56.2 71.8 51.8C75.0 47.4 78.5 44.1 81.8 43.8C85.1 43.5 88.6 46.0 91.8 50.0C95.0 54.0 97.5 61.3 100.7 67.8C103.9 74.3 107.0 83.2 110.7 88.9C114.4 94.6 119.6 101.3 122.9 102.2C126.2 103.1 128.3 99.0 130.7 94.4C133.1 89.8 135.3 78.8 137.3 74.4C139.3 70.0 140.5 69.5 142.9 67.8C145.3 66.1 148.8 66.1 151.8 64.4C154.8 62.7 157.7 59.2 160.7 57.8C163.7 56.4 168.1 56.5 169.6 56.2" fill="none" stroke="#e40000" stroke-width="1.15"/><circle cx="10.7" cy="70" r="4.6" fill="#e40000"/><circle cx="160.7" cy="57.8" r="4.6" fill="#e40000"/></svg><div class="a " style="left:947px;top:659.5px;width:336px;height:236.5px;background:#18181a;"></div><div class="a " style="left:947px;top:898px;width:298px;height:36px;background:#252629;border:2px solid #6f6f6f;"></div><div class="a t mono" style="left:952.8px;top:904.3px;font-size:26.3px;color:#d6d6d6;">geo1</div><div class="a " style="left:1247px;top:898px;width:36px;height:36px;background:#2b2d2d;border:2px solid #6f6f6f;"></div><svg class="a" style="left:0;top:0" width="1800" height="1800"><path d="M1264.4 904.8Q1265.9 915.3 1276.4 916.8Q1265.9 918.3 1264.4 928.8Q1262.9 918.3 1252.4 916.8Q1262.9 915.3 1264.4 904.8Z" fill="#f4f4f4"/></svg><svg class="a" style="left:0;top:0" width="1800" height="1800"><path d="M374.3 692.8 C459 692.8 459 762.4 544.5 762.4" fill="none" stroke="#7a66bd" stroke-width="1.6"/><path d="M374.3 907.5 C459 907.5 459 791 544.5 791" fill="none" stroke="#7a66bd" stroke-width="1.6"/><path d="M818 777 L947 778.9" fill="none" stroke="#7a66bd" stroke-width="1.9"/><path d="M1283 778.8 L1433 777" fill="none" stroke="#7a66bd" stroke-width="1.9"/><rect x="817.5" y="776" width="2.5" height="2" fill="#e8d8ff"/><rect x="373" y="692" width="2.5" height="2" fill="#e8d8ff"/><rect x="373" y="906.5" width="2.5" height="2" fill="#e8d8ff"/><path d="M236 929V1042" fill="none" stroke="rgba(130,156,186,0.62)" stroke-width="2" stroke-dasharray="2 2"/><path d="M236 1014L246 1033H226Z" fill="#4d5c6c"/></svg><div class="a " style="left:947px;top:659.5px;width:336px;height:236.5px;background:transparent;overflow:hidden;"><svg class="a" style="left:0;top:0" width="336" height="236.5" viewBox="0 0 336 236.5"><path d="M166.9 0V45" stroke="#56cf56" stroke-width="2.6"/><path d="M166.9 200V236.5" stroke="#56cf56" stroke-width="2.6"/><path d="M292 1.5L225 64" stroke="#e65252" stroke-width="1.3"/><path d="M0 50.5L87 86.2" stroke="#5555f5" stroke-width="1.3"/><path d="M37.4 201V177" stroke="#3fae3f" stroke-width="1"/><path d="M37.4 201L54 186" stroke="#c84a4a" stroke-width="1"/><path d="M37.4 201L65 212" stroke="#4a4ad8" stroke-width="1"/><rect x="164.4" y="20.2" width="5" height="5" fill="#3a9e3a"/><rect x="95" y="182.5" width="5" height="5" fill="#d04848"/><rect x="260" y="157" width="5" height="5" fill="#4848d8"/></svg><svg class="a" style="left:0;top:0" width="336" height="236.5"><polygon points="86.9,86.1 153.6,39.6 242.4,68.3 231.3,148.3 181.7,209.4 98.8,166.1" fill="#c4c4c6" stroke="#c4c4c6" stroke-width="0.6"/></svg><div class="a" style="left:0;top:0;width:168px;height:94px;transform-origin:0 0;transform:matrix3d(0.554203,-0.236263,0,0.00102330,0.847138,0.284564,0,-0.00107239,0,0,1,0,86.9000,86.1000,0,1);overflow:hidden;"><svg class="a" style="left:0;top:0" width="168" height="94" viewBox="0 0 168 94"><g filter="url(#bl3)"><use href="#beanimg"/></g></svg><div class="a" style="left:0;top:0;width:168px;height:94px;background:linear-gradient(90deg,rgba(30,30,35,0.0),rgba(30,30,35,0.06))"></div></div><div class="a" style="left:0;top:0;width:168px;height:94px;transform-origin:0 0;transform:matrix3d(0.431535,0.130448,0,-0.00082929,0.315665,1.168923,0,0.00191366,0,0,1,0,86.9000,86.1000,0,1);overflow:hidden;"><svg class="a" style="left:0;top:0" width="168" height="94" viewBox="0 0 168 94"><g filter="url(#bl3)"><use href="#beanimg"/></g></svg><div class="a" style="left:0;top:0;width:168px;height:94px;background:linear-gradient(90deg,rgba(30,30,35,0.30),rgba(30,30,35,0.11)),linear-gradient(180deg,rgba(30,30,35,0.0) 40%,rgba(30,30,35,0.18))"></div></div><div class="a" style="left:0;top:0;width:168px;height:94px;transform-origin:0 0;transform:matrix3d(0.628978,-0.259186,0,0.00119019,0.345444,1.333570,0,0.00210610,0,0,1,0,185.2000,125.5000,0,1);overflow:hidden;"><svg class="a" style="left:0;top:0" width="168" height="94" viewBox="0 0 168 94"><g filter="url(#bl3)"><use href="#beanimg"/></g></svg><div class="a" style="left:0;top:0;width:168px;height:94px;background:linear-gradient(180deg,rgba(30,30,35,0.24),rgba(30,30,35,0.40))"></div></div><svg class="a" style="left:0;top:0" width="336" height="236.5" viewBox="0 0 336 236.5"><path d="M166.9 40V75" stroke="#86f086" stroke-width="2.6"/><path d="M136 149L43 236.5" stroke="#ee5c5c" stroke-width="1.3"/><path d="M212.4 138.8L335 189" stroke="#6262f8" stroke-width="1.3"/><text x="169" y="18" font-family="DejaVu Sans, Liberation Sans, sans-serif" font-size="11.5" fill="#3fae3f">1y</text><text x="89.5" y="87.5" font-family="DejaVu Sans, Liberation Sans, sans-serif" font-size="11.5" fill="#5050e8">-1z</text><text x="221.5" y="73" font-family="DejaVu Sans, Liberation Sans, sans-serif" font-size="11.5" fill="#b03c3c">1x</text><text x="265.5" y="159.5" font-family="DejaVu Sans, Liberation Sans, sans-serif" font-size="11.5" fill="#4848d8">1z</text><text x="72.3" y="184" font-family="DejaVu Sans, Liberation Sans, sans-serif" font-size="11.5" fill="#c84a4a">-1x</text><text x="166.5" y="200" font-family="DejaVu Sans, Liberation Sans, sans-serif" font-size="11.5" fill="#3fae3f">-1y</text><text x="36.5" y="177.5" font-family="DejaVu Sans, Liberation Sans, sans-serif" font-size="11.5" fill="#3fae3f">y</text><text x="54" y="185" font-family="DejaVu Sans, Liberation Sans, sans-serif" font-size="11.5" fill="#c84a4a">x</text><text x="63" y="211.5" font-family="DejaVu Sans, Liberation Sans, sans-serif" font-size="11.5" fill="#4a4ad8">z</text></svg></div><div class="a " style="left:0px;top:1564px;width:1800px;height:1px;background:#55565a;"></div><div class="a " style="left:0px;top:1565px;width:448px;height:138px;background:#0c0a17;"></div><div class="a " style="left:448px;top:1565px;width:1px;height:138px;background:#55565a;"></div><div class="a " style="left:449px;top:1565px;width:1351px;height:138px;background:#2b2c30;"></div><div class="a t ui" style="left:25px;top:1579.5px;font-size:24px;color:#6d9eea;letter-spacing:0.6px;">1</div><div class="a t ui" style="left:164px;top:1579.5px;font-size:24px;color:#6c7682;letter-spacing:0.6px;">End:</div><div class="a t ui" style="left:284.5px;top:1579.5px;font-size:24px;color:#6d9eea;letter-spacing:0.6px;">600</div><div class="a t ui" style="left:25px;top:1609.5px;font-size:24px;color:#6d9eea;letter-spacing:0.6px;">1</div><div class="a t ui" style="left:164px;top:1609.5px;font-size:24px;color:#6c7682;letter-spacing:0.6px;">REnd:</div><div class="a t ui" style="left:284.5px;top:1609.5px;font-size:24px;color:#6d9eea;letter-spacing:0.6px;">600</div><div class="a t ui" style="left:25px;top:1639.5px;font-size:24px;color:#6d9eea;letter-spacing:0.6px;">60.0</div><div class="a t ui" style="left:164px;top:1639.5px;font-size:24px;color:#6c7682;letter-spacing:0.6px;">Tempo:</div><div class="a t ui" style="left:284.5px;top:1639.5px;font-size:24px;color:#6d9eea;letter-spacing:0.6px;">120.0</div><div class="a t ui" style="left:25px;top:1669.5px;font-size:24px;color:#6d9eea;letter-spacing:0.6px;">1</div><div class="a t ui" style="left:164px;top:1669.5px;font-size:24px;color:#6c7682;letter-spacing:0.6px;">T Sig:</div><div class="a t ui" style="left:284.5px;top:1669.5px;font-size:24px;color:#6d9eea;letter-spacing:0.6px;">4</div><div class="a t ui" style="left:355px;top:1669.5px;font-size:24px;color:#6d9eea;">4</div><div class="a " style="left:449px;top:1565px;width:1351px;height:27px;background:#0e0e0f;"></div><div class="a " style="left:449px;top:1592px;width:1351px;height:1px;background:#5a5a5a;"></div><div class="a t ui" style="left:450.6px;top:1566.5px;font-size:20px;color:#8c8c8c;">1</div><div class="a " style="left:641px;top:1565px;width:1px;height:27px;background:#5a5a5a;"></div><div class="a t ui" style="left:644.1px;top:1566.5px;font-size:20px;color:#8c8c8c;">51</div><div class="a " style="left:835px;top:1565px;width:1px;height:27px;background:#5a5a5a;"></div><div class="a t ui" style="left:838.1px;top:1566.5px;font-size:20px;color:#8c8c8c;">101</div><div class="a " style="left:1029px;top:1565px;width:1px;height:27px;background:#5a5a5a;"></div><div class="a t ui" style="left:1032.1px;top:1566.5px;font-size:20px;color:#8c8c8c;">151</div><div class="a " style="left:1223px;top:1565px;width:1px;height:27px;background:#5a5a5a;"></div><div class="a t ui" style="left:1226.1px;top:1566.5px;font-size:20px;color:#8c8c8c;">201</div><div class="a " style="left:1417px;top:1565px;width:1px;height:27px;background:#5a5a5a;"></div><div class="a t ui" style="left:1420.1px;top:1566.5px;font-size:20px;color:#8c8c8c;">251</div><div class="a " style="left:1609px;top:1565px;width:1px;height:27px;background:#5a5a5a;"></div><div class="a t ui" style="left:1612.1px;top:1566.5px;font-size:20px;color:#8c8c8c;">301</div><div class="a " style="left:680.5px;top:1565px;width:3px;height:22px;background:#5a72b5;"></div><div class="a " style="left:452px;top:1596px;width:42px;height:16px;background:#4b4b4b;border:1px solid #696969;"></div><div class="a t ui" style="left:452px;top:1594px;font-size:14px;color:#7a7a7a;width:42px;text-align:center;letter-spacing:1px;">...</div><div class="a " style="left:495.5px;top:1596px;width:1310px;height:16px;background:#394a6d;"></div><div class="a " style="left:449px;top:1615px;width:1351px;height:1px;background:#505155;"></div><div class="a " style="left:456px;top:1620px;width:40px;height:39px;background:#363840;border:1px solid #5d5e63;"></div><div class="a " style="left:456px;top:1658px;width:40px;height:38px;background:#363840;border:1px solid #5d5e63;"></div><div class="a t ui" style="left:456px;top:1628px;font-size:23px;color:#6a6e79;width:40px;text-align:center;">/</div><div class="a t mono" style="left:456px;top:1665px;font-size:23px;color:#6a6e79;width:40px;text-align:center;">I</div><div class="a " style="left:502px;top:1620px;width:136px;height:36px;background:#363840;border:1px solid #5d5e63;"></div><div class="a " style="left:504px;top:1622px;width:132px;height:32px;background:#c5834b;"></div><div class="a t ui" style="left:510.819px;top:1627px;font-size:23.5px;color:#4a0c0c;letter-spacing:0.184px;">TimeCode</div><div class="a " style="left:502px;top:1658px;width:136px;height:37.5px;background:#363840;border:1px solid #5d5e63;"></div><div class="a t ui" style="left:535.944px;top:1667.5px;font-size:23.5px;color:#9da6c0;letter-spacing:0.316px;">Beats</div><div class="a " style="left:642px;top:1620px;width:400px;height:78px;background:#000;border:1px solid #4d4d4f;"></div><div class="a t ui" style="left:681.204px;top:1639px;font-size:50px;color:#6d9eea;letter-spacing:1.829px;">00:00:01:00</div><div class="a " style="left:1046px;top:1620px;width:270px;height:78px;background:#000;border:1px solid #4d4d4f;"></div><div class="a t ui" style="left:1149.01px;top:1639px;font-size:50px;color:#6d9eea;letter-spacing:1.982px;">61</div><div class="a " style="left:1320px;top:1620px;width:78px;height:78px;background:#363840;border:1px solid #5d5e63;"></div><div class="a " style="left:1402px;top:1620px;width:78px;height:78px;background:#363840;border:1px solid #5d5e63;"></div><div class="a " style="left:1484px;top:1620px;width:78px;height:78px;background:#363840;border:1px solid #5d5e63;"></div><div class="a " style="left:1566px;top:1620px;width:78px;height:78px;background:#363840;border:1px solid #5d5e63;"></div><div class="a " style="left:1648px;top:1620px;width:78px;height:78px;background:#363840;border:1px solid #5d5e63;"></div><div class="a " style="left:1730px;top:1620px;width:78px;height:78px;background:#363840;border:1px solid #5d5e63;"></div><div class="a " style="left:1568px;top:1622px;width:74px;height:74px;background:#c5834b;"></div><svg class="a" style="left:0;top:0" width="1800" height="1800"><rect x="1347" y="1649" width="3" height="20" fill="#a9b0c6"/><path d="M1360 1649V1669L1350.5 1659Z M1371 1649V1669L1361 1659Z" fill="#a9b0c6"/><rect x="1434.5" y="1649" width="4" height="20" fill="#a9b0c6"/><rect x="1443" y="1649" width="4" height="20" fill="#a9b0c6"/><path d="M1525 1649V1669L1515 1659Z" fill="#a9b0c6"/><path d="M1601 1649V1669L1611 1659Z" fill="#4a0606"/><rect x="1682" y="1657.5" width="10" height="2.6" fill="#a9b0c6"/><path d="M1769 1649V1669M1759 1659H1779" stroke="#a9b0c6" stroke-width="2.6" fill="none"/></svg><div class="a " style="left:0px;top:1703px;width:1800px;height:2px;background:#55565a;"></div><div class="a " style="left:0px;top:1705px;width:1800px;height:95px;background:linear-gradient(90deg,#25272e 0%,#222429 30%,#232428 55%,#202226 85%,#1c1e27 100%);"></div><div class="a t lib" style="left:-4.5px;top:1724.7px;font-size:24.5px;color:#ffffff;">2 mm of rain</div><div class="a t lib" style="left:-9px;top:1756px;font-size:24px;color:#cfcfcf;">Thursday</div><svg class="a" style="left:665px;top:1729px" width="47" height="47"><defs><linearGradient id="wg" x1="0" y1="0" x2="1" y2="1"><stop offset="0" stop-color="#86d9fb"/><stop offset="0.5" stop-color="#3fc0f8"/><stop offset="1" stop-color="#0f95f3"/></linearGradient></defs><path d="M2 0H22.5V22.5H0V2A2 2 0 0 1 2 0Z M24.5 0H45A2 2 0 0 1 47 2V22.5H24.5Z M0 24.5H22.5V47H2A2 2 0 0 1 0 45Z M24.5 24.5H47V45A2 2 0 0 1 45 47H24.5Z" fill="url(#wg)"/></svg><div class="a " style="left:738px;top:1720px;width:440px;height:64px;background:linear-gradient(90deg,#37383d,#45464b 60%,#3c3d42);border:1.5px solid #56575c;border-radius:32px;"></div><svg class="a" style="left:755px;top:1730px" width="45" height="45"><circle cx="20" cy="19" r="10.5" fill="none" stroke="#e4e4e6" stroke-width="3"/><path d="M27.5 27.5L35.5 36" stroke="#e4e4e6" stroke-width="3.4" stroke-linecap="round"/></svg><div class="a t lib" style="left:811.097px;top:1740.5px;font-size:26.5px;color:#e2e2e4;letter-spacing:-0.008px;">Search</div><svg class="a" style="left:0;top:0" width="1800" height="1800"><rect x="1201.7" y="1741.7" width="36" height="32.5" rx="2.5" fill="#6d6d6f"/><rect x="1201.7" y="1770" width="36" height="4.2" rx="2" fill="#555557"/><defs><linearGradient id="tv" x1="0" y1="0" x2="1" y2="1"><stop offset="0" stop-color="#ffffff"/><stop offset="1" stop-color="#cfcfcf"/></linearGradient></defs><rect x="1214" y="1729.3" width="36" height="32.5" rx="2.5" fill="url(#tv)"/><rect x="1214" y="1741.7" width="23.7" height="20.1" fill="#b9b9b9" opacity="0.75"/><defs><linearGradient id="cp1" x1="0" y1="0" x2="1" y2="1"><stop offset="0" stop-color="#2a7fe0"/><stop offset="0.5" stop-color="#3aa0e8"/><stop offset="1" stop-color="#9a6ad8"/></linearGradient><linearGradient id="cp2" x1="0" y1="0" x2="0" y2="1"><stop offset="0" stop-color="#1a8ee8"/><stop offset="0.3" stop-color="#2cc0c8"/><stop offset="0.6" stop-color="#6cc848"/><stop offset="0.95" stop-color="#f2d020"/></linearGradient><linearGradient id="cp3" x1="0" y1="0" x2="0" y2="1"><stop offset="0" stop-color="#b060ea"/><stop offset="0.45" stop-color="#ee5a98"/><stop offset="1" stop-color="#f8a24c"/></linearGradient></defs><path d="M1303 1732 H1321 Q1325 1732 1324 1736 L1316.5 1757 Q1315 1760.5 1311 1760.5 L1296 1759 Q1291.5 1758 1292.5 1753.5 L1297.5 1736 Q1298.8 1732 1303 1732Z" fill="url(#cp2)"/><path d="M1316 1732 H1321 Q1325.5 1732 1326.5 1737 L1328 1744 H1319.5Z" fill="#1748c8"/><path d="M1322 1743.5 L1332 1744 Q1337 1744.5 1335.8 1749.5 L1330 1768 Q1328.8 1772 1324.5 1772 H1308.5 Q1304 1772 1305 1767.5 L1307 1760 L1312.5 1760 L1318.5 1746 Q1319.5 1743.5 1322 1743.5Z" fill="url(#cp3)"/><path d="M1303 1760 L1312.5 1760 L1309.5 1772 H1308 Q1304 1771.5 1303.5 1767Z" fill="#e0442a"/><path d="M1315.7 1744 H1320 L1313 1760 H1308.6Z" fill="#1f2126"/><path d="M1378 1735 Q1378 1732 1381 1732 H1393 L1398 1736 H1424 Q1427 1736 1427 1739 V1745 H1378Z" fill="#e8a817"/><defs><linearGradient id="fd" x1="0" y1="0" x2="0" y2="1"><stop offset="0" stop-color="#ffd75e"/><stop offset="1" stop-color="#f5bd2f"/></linearGradient></defs><path d="M1378 1741 Q1378 1739 1380 1739 H1395 L1399 1736.5 H1425 Q1427 1736.5 1427 1739 V1771 Q1427 1774 1424 1774 H1381 Q1378 1774 1378 1771Z" fill="url(#fd)"/><path d="M1386 1774 V1764 Q1386 1760.5 1389.5 1760.5 H1414.5 Q1418 1760.5 1418 1764 V1774Z" fill="#1a86dc"/><rect x="1391" y="1765" width="22" height="2.2" rx="1" fill="#0c5cab"/><defs><linearGradient id="gr" x1="0" y1="0" x2="0" y2="1"><stop offset="0" stop-color="#a6adb5"/><stop offset="1" stop-color="#6c737b"/></linearGradient></defs><path d="M1512.5 1747.4 L1512.5 1756.6 L1505.1 1758.7 L1503.4 1761.7 L1505.2 1769.2 L1497.3 1773.8 L1491.7 1768.4 L1488.3 1768.4 L1482.7 1773.8 L1474.8 1769.2 L1476.6 1761.7 L1474.9 1758.7 L1467.5 1756.6 L1467.5 1747.4 L1474.9 1745.3 L1476.6 1742.3 L1474.8 1734.8 L1482.7 1730.2 L1488.3 1735.6 L1491.7 1735.6 L1497.3 1730.2 L1505.2 1734.8 L1503.4 1742.3 L1505.1 1745.3 Z" fill="url(#gr)" stroke="url(#gr)" stroke-width="3.5" stroke-linejoin="round"/><circle cx="1490" cy="1752" r="12" fill="#e8eaed"/><circle cx="1490" cy="1752" r="8" fill="#0f62b8"/><circle cx="1580" cy="1752" r="21.3" fill="none" stroke="#f0264f" stroke-width="3"/><ellipse cx="1578.7" cy="1752" rx="12.6" ry="19.8" fill="none" stroke="#f0264f" stroke-width="2.6"/><path d="M1583 1738.5 Q1596 1752 1583 1765.5" fill="none" stroke="#f0264f" stroke-width="2"/><path d="M1676 1748 H1689 V1759 Q1689 1767 1681 1767 H1676Z" fill="#5059c9"/><circle cx="1665.5" cy="1737.5" r="6.5" fill="#7b83eb"/><path d="M1656 1746 H1679 V1760 Q1679 1773 1667.5 1773 Q1656 1773 1656 1760Z" fill="#7b83eb"/><defs><linearGradient id="tm" x1="0" y1="0" x2="1" y2="1"><stop offset="0" stop-color="#5a62c8"/><stop offset="1" stop-color="#4048b0"/></linearGradient></defs><rect x="1642" y="1740" width="24" height="24" rx="2.5" fill="url(#tm)"/><path d="M1648 1747.2H1660M1654 1747.2V1759.5" stroke="#fff" stroke-width="2.7" fill="none"/><circle cx="1684" cy="1734" r="14.6" fill="#13a10e" stroke="#202227" stroke-width="1.6"/><path d="M1678.3 1734.3L1682.6 1738.2L1689.8 1729.8" stroke="#143d18" stroke-width="2.6" fill="none"/><rect x="1730" y="1728" width="48.5" height="47.5" rx="5" fill="#141414"/><path d="M1753.8 1735 H1748.35 A5.45 5.45 0 0 0 1748.35 1745.9 H1753.8Z" fill="#f24e1e"/><path d="M1753.8 1735 H1759.25 A5.45 5.45 0 0 1 1759.25 1745.9 H1753.8Z" fill="#ff7262"/><path d="M1753.8 1745.9 H1748.35 A5.45 5.45 0 0 0 1748.35 1756.8 H1753.8Z" fill="#a259ff"/><circle cx="1759.25" cy="1751.35" r="5.45" fill="#1abcfe"/><path d="M1753.8 1756.8 H1748.35 A5.45 5.45 0 1 0 1753.8 1762.25Z" fill="#0acf83"/><rect x="1395.7" y="1784.5" width="12" height="4.5" rx="2.2" fill="#8d8d8f"/><rect x="1572" y="1784.5" width="12" height="4.5" rx="2.2" fill="#8d8d8f"/><rect x="1660" y="1784.5" width="12" height="4.5" rx="2.2" fill="#8d8d8f"/><rect x="1747.5" y="1784.5" width="12" height="4.5" rx="2.2" fill="#8d8d8f"/></svg></body></html>
